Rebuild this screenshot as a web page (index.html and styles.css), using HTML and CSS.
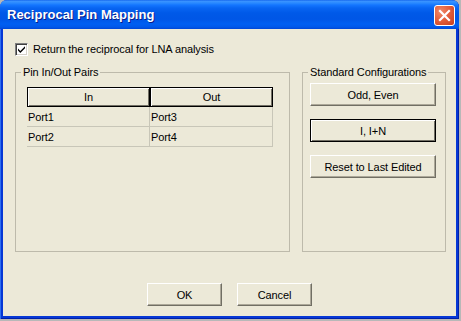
FILE: index.html
```html
<!DOCTYPE html>
<html>
<head>
<meta charset="utf-8">
<title>Reciprocal Pin Mapping</title>
<link rel="stylesheet" href="styles.css">
</head>
<body>
<div class="window">
  <div class="titlebar">
    <span class="title">Reciprocal Pin Mapping</span>
    <button class="close" aria-label="Close">
      <svg width="19" height="19" viewBox="0 0 19 19"><path d="M5 5 L14 14 M14 5 L5 14" stroke="#fff" stroke-width="2.2" stroke-linecap="square"/></svg>
    </button>
  </div>
  <div class="client">
    <label class="check-row">
      <span class="checkbox"><svg width="11" height="11" viewBox="0 0 11 11"><path d="M2 4.5 L4.3 7 L9 2.2 L9 4.3 L4.3 9 L2 6.6 Z" fill="#000"/></svg></span>
      <span>Return the reciprocal for LNA analysis</span>
    </label>
    <div class="groups">
      <fieldset class="group group-pairs">
        <legend>Pin In/Out Pairs</legend>
        <table class="pairs">
          <thead><tr><th>In</th><th>Out</th></tr></thead>
          <tbody>
            <tr><td>Port1</td><td>Port3</td></tr>
            <tr><td>Port2</td><td>Port4</td></tr>
          </tbody>
        </table>
      </fieldset>
      <fieldset class="group group-std">
        <legend>Standard Configurations</legend>
        <div class="std-buttons">
          <button class="btn btn-wide">Odd, Even</button>
          <button class="btn btn-wide btn-default">I, I+N</button>
          <button class="btn btn-wide">Reset to Last Edited</button>
        </div>
      </fieldset>
    </div>
    <div class="actions">
      <button class="btn">OK</button>
      <button class="btn">Cancel</button>
    </div>
  </div>
</div>
</body>
</html>
```
FILE: styles.css
```css
html, body {
  margin: 0;
  padding: 0;
}
body {
  background: #b8b8b8;
  font-family: "Liberation Sans", Arial, sans-serif;
  font-size: 11px;
  letter-spacing: -0.1px;
  color: #000;
}
.window {
  width: 459px;
  height: 319px;
  display: flex;
  flex-direction: column;
  background: #0638d6;
  border-radius: 7px 7px 0 0;
  overflow: hidden;
  box-shadow: inset 1px 0 #2f6ff0, inset -1px -1px #0020a8;
}
.titlebar {
  flex: none;
  height: 29px;
  box-sizing: border-box;
  display: flex;
  align-items: flex-start;
  justify-content: space-between;
  padding: 5px 4px 0 7px;
  background: linear-gradient(to bottom,
    #0a5ae8 0px, #3d95ff 1px, #2a8aff 3px, #1476ff 5px, #0865f2 8px,
    #0059e8 13px, #0056e6 19px, #005ff2 24px, #0058ea 27px, #0046d6 29px);
}
.title {
  color: #fff;
  font-weight: bold;
  font-size: 13px;
  letter-spacing: 0;
  line-height: 20px;
  text-shadow: 1px 1px #0a1e8a;
}
.close {
  width: 21px;
  height: 21px;
  padding: 0;
  margin: 0;
  box-sizing: border-box;
  border: 1px solid #fff;
  border-radius: 3px;
  background: radial-gradient(circle at 30% 30%, #f08a6a 0%, #e4603e 45%, #c63d1c 100%);
  display: flex;
  align-items: center;
  justify-content: center;
}
.client {
  flex: 1;
  margin: 0 3px 3px 3px;
  background: #ece9d8;
  display: flex;
  flex-direction: column;
  padding: 14px 0 10px 12px;
}
.check-row {
  display: flex;
  align-items: center;
  gap: 5px;
  height: 13px;
  line-height: 13px;
}
.checkbox {
  width: 13px;
  height: 13px;
  box-sizing: border-box;
  border-top: 1px solid #808080;
  border-left: 1px solid #808080;
  border-right: 1px solid #fff;
  border-bottom: 1px solid #fff;
  box-shadow: inset 1px 1px #404040, inset -1px -1px #d4d0c8;
  background: #fff;
  display: flex;
  align-items: center;
  justify-content: center;
}
.checkbox svg {
  display: block;
}
.groups {
  display: flex;
  gap: 12px;
  margin-top: 10px;
}
.group {
  margin: 0;
  padding: 0 0 0 5px;
  border: 1px solid #bdbaab;
  height: 186px;
  box-sizing: border-box;
}
.group legend {
  padding: 0 2px;
  line-height: 13px;
}
.group-pairs {
  width: 275px;
}
.group-std {
  width: 144px;
}
.pairs {
  margin: 8px 0 0 6px;
  width: 246px;
  table-layout: fixed;
  border-collapse: separate;
  border-spacing: 0;
}
.pairs th {
  height: 20px;
  box-sizing: border-box;
  padding: 0;
  font-weight: normal;
  text-align: center;
  border: 1px solid #000;
  box-shadow: inset 1px 1px #fff, inset -1px -1px #716f64;
  background: #ece9d8;
}
.pairs td {
  height: 20px;
  box-sizing: border-box;
  padding: 0 0 0 1px;
  border-right: 1px solid #c8c6b8;
  border-bottom: 1px solid #c8c6b8;
}
.std-buttons {
  display: flex;
  flex-direction: column;
  gap: 13px;
  margin: 4px 0 0 2px;
}
.btn {
  font-family: inherit;
  font-size: 11px;
  letter-spacing: -0.1px;
  color: #000;
  width: 75px;
  height: 23px;
  box-sizing: border-box;
  padding: 0;
  background: #ece9d8;
  border-top: 1px solid #fff;
  border-left: 1px solid #fff;
  border-right: 1px solid #716f64;
  border-bottom: 1px solid #716f64;
  box-shadow: inset -1px -1px #aca899;
}
.btn-wide {
  width: 126px;
}
.btn-default {
  border: 1px solid #000;
  box-shadow: inset 1px 1px #fff, inset -1px -1px #716f64;
}
.actions {
  margin-top: auto;
  display: flex;
  justify-content: center;
  gap: 15px;
  padding-right: 12px;
}
```
